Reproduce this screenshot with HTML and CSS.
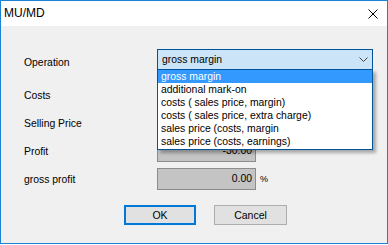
FILE: index.html
```html
<html>
    <head>
        <title>MU/MD</title>
        <link rel="stylesheet" href="styles.css">
    </head>
    <body>
        <div class="window">
            <div class="titlebar">
                <span class="title">MU/MD</span>
                <svg class="close" width="10" height="10" viewBox="0 0 10 10"><path d="M0.5 0.5 L9.5 9.5 M9.5 0.5 L0.5 9.5" stroke="#000" stroke-width="1" fill="none"/></svg>
            </div>
            <div class="content">
                <div class="row first">
                    <span class="label op">Operation</span>
                    <div class="combo-wrap">
                        <div class="combo">
                            <span>gross margin</span>
                            <svg width="9" height="5" viewBox="0 0 9 5"><path d="M0.5 0.5 L4.5 4.5 L8.5 0.5" stroke="#444" stroke-width="1" fill="none"/></svg>
                        </div>
                        <ul class="list">
                            <li class="sel">gross margin</li>
                            <li>additional mark-on</li>
                            <li>costs ( sales price, margin)</li>
                            <li>costs ( sales price, extra charge)</li>
                            <li>sales price (costs, margin</li>
                            <li>sales price (costs, earnings)</li>
                        </ul>
                    </div>
                </div>
                <div class="row">
                    <span class="label">Costs</span>
                    <div class="field"></div>
                </div>
                <div class="row">
                    <span class="label">Selling Price</span>
                    <div class="field"></div>
                </div>
                <div class="row">
                    <span class="label">Profit</span>
                    <div class="field">-30.00</div>
                </div>
                <div class="row">
                    <span class="label">gross profit</span>
                    <div class="field">0.00</div>
                    <span class="unit">%</span>
                </div>
                <div class="buttons">
                    <button class="btn default">OK</button>
                    <button class="btn">Cancel</button>
                </div>
            </div>
        </div>
    </body>
</html>
```
FILE: styles.css
```css
html {
    background: #ffffff;
}
body {
    margin: 0;
    font-family: "Liberation Sans", Arial, sans-serif;
    font-size: 10.4px;
    color: #000000;
}
.window {
    width: 388px;
    height: 244px;
    box-sizing: border-box;
    border: 1px solid #1883d7;
    display: flex;
    flex-direction: column;
    background: #f0f0f0;
}
.titlebar {
    height: 25px;
    background: #ffffff;
    display: flex;
    align-items: center;
    justify-content: space-between;
    padding: 0 9px 0 3px;
}
.title {
    font-size: 12px;
    margin-top: -1px;
}
.close {
    margin-top: 1px;
}
.content {
    padding: 23px 0 0 23px;
}
.row {
    display: flex;
    align-items: center;
    height: 22px;
    margin-bottom: 6px;
}
.row.first {
    height: 21px;
    margin-bottom: 14px;
}
.label {
    width: 133px;
}
.label.op {
    padding-top: 5px;
}
.combo-wrap {
    position: relative;
}
.combo {
    width: 216px;
    height: 21px;
    box-sizing: border-box;
    border: 1px solid #005499;
    background: #cce4f7;
    display: flex;
    align-items: center;
    justify-content: space-between;
    padding: 0 4px 0 4px;
}
.combo span {
    margin-top: -1px;
}
.list {
    position: absolute;
    left: 0;
    top: 20px;
    width: 216px;
    box-sizing: border-box;
    margin: 0;
    padding: 0 0 1px 0;
    list-style: none;
    background: #ffffff;
    border: 1px solid #005499;
    box-shadow: 3px 3px 3px rgba(0, 0, 0, 0.3);
    z-index: 10;
}
.list li {
    height: 13px;
    line-height: 13px;
    padding-left: 3px;
    white-space: nowrap;
}
.list li.sel {
    background: #3399ff;
    color: #ffffff;
}
.field {
    width: 99px;
    height: 22px;
    box-sizing: border-box;
    border: 1px solid #8c8c8c;
    background: #c4c4c4;
    text-align: right;
    padding-right: 3px;
    line-height: 20px;
}
.unit {
    margin-left: 4px;
    font-size: 9px;
}
.buttons {
    display: flex;
    gap: 18px;
    margin-top: 15px;
    padding-left: 100px;
}
.btn {
    width: 72px;
    height: 20px;
    box-sizing: border-box;
    border: 1px solid #adadad;
    background: #e1e1e1;
    font-family: "Liberation Sans", Arial, sans-serif;
    font-size: 10.5px;
    color: #000000;
    padding: 0;
}
.btn.default {
    border: 2px solid #0078d7;
}
.btn + .btn {
    width: 73px;
}
```
